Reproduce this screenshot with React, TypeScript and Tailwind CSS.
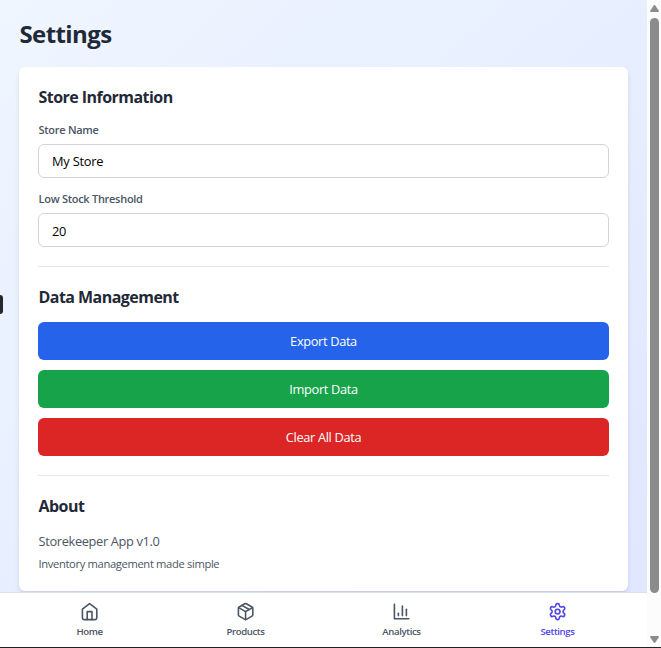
import type { ReactNode } from "react";

function NavIcon({ children }: { children: ReactNode }) {
  return (
    <svg className="size-[19.2px]" viewBox="0 0 24 24" fill="none" stroke="currentColor" strokeWidth="2" strokeLinecap="round" strokeLinejoin="round">
      {children}
    </svg>
  );
}

const tabs = [
  {
    label: "Home",
    icon: (
      <>
        <path d="m3 9 9-7 9 7v11a2 2 0 0 1-2 2H5a2 2 0 0 1-2-2z" />
        <path d="M9 22V12h6v10" />
      </>
    ),
  },
  {
    label: "Products",
    icon: (
      <>
        <path d="m7.5 4.27 9 5.15" />
        <path d="M21 8a2 2 0 0 0-1-1.73l-7-4a2 2 0 0 0-2 0l-7 4A2 2 0 0 0 3 8v8a2 2 0 0 0 1 1.73l7 4a2 2 0 0 0 2 0l7-4A2 2 0 0 0 21 16Z" />
        <path d="m3.3 7 8.7 5 8.7-5" />
        <path d="M12 22V12" />
      </>
    ),
  },
  {
    label: "Analytics",
    icon: (
      <>
        <path d="M3 3v18h18" />
        <path d="M18 17V9" />
        <path d="M13 17V5" />
        <path d="M8 17v-3" />
      </>
    ),
  },
  {
    label: "Settings",
    icon: (
      <>
        <path d="M12.22 2h-.44a2 2 0 0 0-2 2v.18a2 2 0 0 1-1 1.73l-.43.25a2 2 0 0 1-2 0l-.15-.08a2 2 0 0 0-2.73.73l-.22.38a2 2 0 0 0 .73 2.73l.15.1a2 2 0 0 1 1 1.72v.51a2 2 0 0 1-1 1.74l-.15.09a2 2 0 0 0-.73 2.73l.22.38a2 2 0 0 0 2.73.73l.15-.08a2 2 0 0 1 2 0l.43.25a2 2 0 0 1 1 1.73V20a2 2 0 0 0 2 2h.44a2 2 0 0 0 2-2v-.18a2 2 0 0 1 1-1.73l.43-.25a2 2 0 0 1 2 0l.15.08a2 2 0 0 0 2.73-.73l.22-.39a2 2 0 0 0-.73-2.73l-.15-.08a2 2 0 0 1-1-1.74v-.5a2 2 0 0 1 1-1.74l.15-.09a2 2 0 0 0 .73-2.73l-.22-.38a2 2 0 0 0-2.73-.73l-.15.08a2 2 0 0 1-2 0l-.43-.25a2 2 0 0 1-1-1.73V4a2 2 0 0 0-2-2z" />
        <circle cx="12" cy="12" r="3" />
      </>
    ),
  },
];

function Field({ label, value, inset }: { label: string; value: string; inset: string }) {
  return (
    <label className="block">
      <span className="block h-4 pl-[0.5px] text-[11px] font-semibold leading-4 tracking-[-0.28px] text-[#4b5563]">{label}</span>
      <input
        defaultValue={value}
        className={
          "mt-1.5 block h-[34px] w-full rounded-md border border-[#d1d5db] bg-white px-[13px] text-[12.8px] tracking-[-0.2px] text-black outline-none " +
          inset
        }
      />
    </label>
  );
}

function SectionTitle({ children }: { children: ReactNode }) {
  return <h2 className="h-[22px] pl-[0.5px] text-[16px] font-bold leading-[23px] tracking-[-0.54px] text-[#1f2937]">{children}</h2>;
}

export default function App() {
  return (
    <div className="flex h-[648px] w-[661px] flex-col overflow-hidden bg-white font-['Open_Sans','Noto_Sans',sans-serif]">
      <div className="flex h-[647px]">
        <div className="relative flex w-[647px] flex-col">
          <main className="h-[592px] overflow-hidden bg-linear-to-br from-[#eff6ff] to-[#e0e7ff] px-[19px] pt-[19px]">
            <h1 className="h-[29px] pl-[0.5px] text-[24px] font-bold leading-[29px] tracking-[-0.6px] text-[#1f2937]">Settings</h1>
            <section className="mt-[19px] h-[524px] w-[609px] rounded-md bg-white px-[19px] pt-[19px] shadow-md">
              <SectionTitle>Store Information</SectionTitle>
              <div className="mt-[14px] flex flex-col gap-[13px]">
                <Field label="Store Name" value="My Store" inset="pt-0" />
                <Field label="Low Stock Threshold" value="20" inset="pt-0.5" />
              </div>

              <div className="mt-[19px] border-t border-[#e5e7eb] pt-[19px]">
                <SectionTitle>Data Management</SectionTitle>
                <div className="mt-[14px] flex flex-col gap-[10px] text-[12.8px] font-medium tracking-[-0.34px] text-white">
                  <button className="h-[38px] rounded-md bg-[#2563eb] pt-px">Export Data</button>
                  <button className="h-[38px] rounded-md bg-[#16a34a] pt-px">Import Data</button>
                  <button className="h-[38px] rounded-md bg-[#dc2626] pt-px">Clear All Data</button>
                </div>
              </div>

              <div className="mt-[19px] border-t border-[#e5e7eb] pt-[19px]">
                <SectionTitle>About</SectionTitle>
                <p className="mt-[14px] h-[19px] pl-[0.5px] text-[12.8px] leading-[20px] tracking-[-0.34px] text-[#4b5563]">Storekeeper App v1.0</p>
                <p className="mt-[6px] h-4 pl-[0.5px] text-[11.2px] leading-4 tracking-[-0.35px] text-[#4b5563]">Inventory management made simple</p>
              </div>
            </section>
          </main>
          <nav className="flex h-[55px] border-t border-[#dbe1ea] bg-white px-[11.5px] pt-[9px]">
            {tabs.map((tab) => (
              <a
                key={tab.label}
                className={
                  "flex w-[156px] flex-col items-center gap-1 text-[9.6px] font-semibold leading-[13px] tracking-[-0.38px] " +
                  (tab.label === "Settings" ? "text-[#4f46e5]" : "text-[#4b5563]")
                }
              >
                <NavIcon>{tab.icon}</NavIcon>
                <span>{tab.label}</span>
              </a>
            ))}
          </nav>
          <div className="absolute left-0 top-[295px] h-[19px] w-[3px] rounded-r-[3px] bg-[#272727]" />
        </div>
        <div className="flex w-[14px] flex-col items-center bg-[#fcfcfc] pl-px pt-1">
          <svg className="h-2 w-[9px]" viewBox="0 0 9 8" fill="#8b8b8b">
            <path d="M3.7 1.4Q4.5.6 5.3 1.4L8.8 6.7Q9.2 8 8 8H1Q-.2 8 .2 6.7Z" />
          </svg>
          <div className="mt-[6px] h-[575px] w-[9px] rounded-full bg-[#8b8b8b]" />
          <svg className="mt-[43px] h-[7px] w-[9px]" viewBox="0 0 9 7" fill="#8b8b8b">
            <path d="M3.7 6.4Q4.5 7.2 5.3 6.4L8.8 1.3Q9.2 0 8 0H1Q-.2 0 .2 1.3Z" />
          </svg>
        </div>
      </div>
      <div className="h-px bg-[#202124]" />
    </div>
  );
}
